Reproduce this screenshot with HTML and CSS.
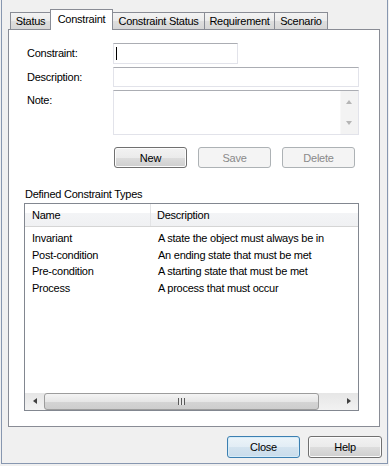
FILE: index.html
```html
<!DOCTYPE html>
<html>
  <head>
    <link rel="stylesheet" href="styles.css">
  </head>
  <body>
    <div class="window">
      <div class="tabs">
        <div class="tab tab-status">Status</div>
        <div class="tab active tab-constraint">Constraint</div>
        <div class="tab tab-cstatus">Constraint Status</div>
        <div class="tab tab-req">Requirement</div>
        <div class="tab tab-scenario">Scenario</div>
      </div>

      <div class="panel">
        <div class="form">
          <div class="label">Constraint:</div>
          <div class="field field-short"><span class="caret"></span></div>
          <div class="label">Description:</div>
          <div class="field"></div>
          <div class="label">Note:</div>
          <div class="field field-note">
            <div class="vscroll">
              <span class="arrow-up"></span>
              <span class="arrow-down"></span>
            </div>
          </div>
        </div>

        <div class="actions">
          <button class="btn">New</button>
          <button class="btn" disabled>Save</button>
          <button class="btn" disabled>Delete</button>
        </div>

        <div class="group-title">Defined Constraint Types</div>
        <div class="list">
          <div class="list-head">
            <div class="col-name">Name</div>
            <div class="col-desc">Description</div>
          </div>
          <div class="list-body">
            <div class="row"><div class="col-name">Invariant</div><div class="col-desc">A state the object must always be in</div></div>
            <div class="row"><div class="col-name">Post-condition</div><div class="col-desc">An ending state that must be met</div></div>
            <div class="row"><div class="col-name">Pre-condition</div><div class="col-desc">A starting state that must be met</div></div>
            <div class="row"><div class="col-name">Process</div><div class="col-desc">A process that must occur</div></div>
          </div>
          <div class="hscroll">
            <div class="sb-btn"><span class="arrow-left"></span></div>
            <div class="thumb"><span class="grip"></span></div>
            <div class="track"></div>
            <div class="sb-btn"><span class="arrow-right"></span></div>
          </div>
        </div>
      </div>

      <div class="footer">
        <button class="btn btn-focus">Close</button>
        <button class="btn btn-help">Help</button>
      </div>
    </div>
  </body>
</html>
```

FILE: styles.css
```css
body {
  margin: 0;
  background-color: #f0f0f0;
  font-family: "Liberation Sans", Arial, sans-serif;
  font-size: 11px;
  letter-spacing: -0.25px;
  color: #000;
}

.window {
  margin-left: 1px;
  width: 387px;
  height: 464px;
  box-sizing: border-box;
  border: 1px solid #8797b0;
  border-top: none;
  padding: 9px 5px 0 6px;
}

/* tab strip */
.tabs {
  display: flex;
  align-items: flex-end;
  height: 20px;
  padding-left: 2px;
}

.tab {
  box-sizing: border-box;
  height: 17px;
  margin-left: -1px;
  border: 1px solid #898c95;
  border-bottom: none;
  background: linear-gradient(#f3f3f3, #ebebeb 50%, #dedede 51%, #d6d6d6);
  text-align: center;
  line-height: 17px;
}

.tab-status {
  width: 41px;
  margin-left: 0;
}

.tab-constraint {
  width: 63px;
}

.tab-cstatus {
  width: 93px;
}

.tab-req {
  width: 71px;
}

.tab-scenario {
  width: 54px;
}

.tab.active {
  position: relative;
  z-index: 1;
  height: 21px;
  margin-bottom: -1px;
  background: #fff;
  line-height: 18px;
}

.panel {
  width: 372px;
  height: 398px;
  box-sizing: border-box;
  border: 1px solid #898c95;
  background-color: #fff;
  padding: 13px 20px 0 15px;
}

/* form fields */
.form {
  display: grid;
  grid-template-columns: 89px 1fr;
  row-gap: 3px;
}

.label {
  padding: 4px 0 0 3px;
  line-height: 13px;
}

.field {
  position: relative;
  height: 20px;
  box-sizing: border-box;
  border: 1px solid #e2e3ea;
  border-top-color: #abadb3;
  background: #fff;
}

.field-short {
  width: 125px;
  height: 21px;
}

.field-note {
  height: 45px;
}

.caret {
  position: absolute;
  left: 2px;
  top: 3px;
  width: 1px;
  height: 13px;
  background: #000;
}

.vscroll {
  position: absolute;
  right: 0;
  top: 0;
  bottom: 0;
  width: 17px;
  background: #f3f3f3;
  border-left: 1px solid #f8f8f8;
}

.arrow-up,
.arrow-down {
  position: absolute;
  left: 5px;
  width: 0;
  height: 0;
  border-left: 3.5px solid transparent;
  border-right: 3.5px solid transparent;
}

.arrow-up {
  top: 9px;
  border-bottom: 4px solid #b5b5b5;
}

.arrow-down {
  bottom: 9px;
  border-top: 4px solid #b5b5b5;
}

/* buttons */
.actions {
  display: flex;
  gap: 11px;
  margin-top: 12px;
  padding-left: 90px;
}

.btn {
  width: 73px;
  height: 21px;
  box-sizing: border-box;
  border: 1px solid #707070;
  border-radius: 3px;
  background: linear-gradient(#f2f2f2, #ebebeb 50%, #dddddd 51%, #cfcfcf);
  box-shadow: inset 0 0 0 1px #fcfcfc;
  font-family: inherit;
  font-size: 11px;
  letter-spacing: inherit;
  color: #000;
  padding: 0;
}

.btn:disabled {
  border-color: #adb2b5;
  background: #f4f4f4;
  box-shadow: none;
  color: #8a8a8a;
}

.group-title {
  margin: 20px 0 2px 1px;
  line-height: 13px;
}

/* list view */
.list {
  height: 208px;
  box-sizing: border-box;
  border: 1px solid #828790;
  display: flex;
  flex-direction: column;
}

.list-head {
  display: flex;
  height: 23px;
  box-sizing: border-box;
  border-bottom: 1px solid #d5d5d5;
  background: linear-gradient(#ffffff, #ffffff 40%, #f3f4f6 41%, #f0f1f3);
  line-height: 22px;
}

.list-head .col-name {
  border-right: 1px solid #e3e4e6;
}

.col-name {
  width: 126px;
  padding-left: 7px;
  box-sizing: border-box;
}

.col-desc {
  padding-left: 6px;
}

.list-body {
  flex: 1;
  padding-top: 3px;
}

.row {
  display: flex;
  height: 16.7px;
  line-height: 16px;
}

.row .col-desc {
  padding-left: 7px;
}

.hscroll {
  display: flex;
  height: 17px;
  background: linear-gradient(#e6e6e6, #f2f2f2);
}

.sb-btn {
  position: relative;
  width: 17px;
  margin: 0 1px;
}

.arrow-left,
.arrow-right {
  position: absolute;
  top: 5px;
  width: 0;
  height: 0;
  border-top: 3.5px solid transparent;
  border-bottom: 3.5px solid transparent;
}

.arrow-left {
  left: 7px;
  border-right: 4px solid #404040;
}

.arrow-right {
  left: 7px;
  border-left: 4px solid #404040;
}

.thumb {
  position: relative;
  width: 275px;
  box-sizing: border-box;
  border: 1px solid #9c9c9c;
  border-radius: 3px;
  background: linear-gradient(#f4f4f4, #e6e6e6 50%, #d4d4d4 51%, #cdcdcd);
}

.grip {
  position: absolute;
  left: 133px;
  top: 4px;
  width: 7px;
  height: 7px;
  background: repeating-linear-gradient(90deg, #5a5a5a 0 1px, #e8e8e8 1px 3px);
}

.track {
  flex: 1;
}

.footer {
  display: flex;
  justify-content: flex-end;
  gap: 8px;
  margin-top: 9px;
}

.footer .btn {
  height: 22px;
}

.btn-help {
  width: 74px;
}

.btn-focus {
  border-color: #3c7fb1;
  background: linear-gradient(#ecf4f9, #e2edf5 50%, #d3e3ef 51%, #c9dceb);
  box-shadow: inset 0 0 0 1px #d6ecf8;
}
```
